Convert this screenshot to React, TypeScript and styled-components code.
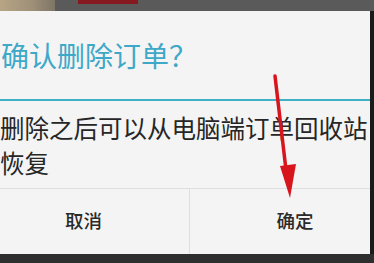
import styled, { createGlobalStyle } from "styled-components";

const GlobalStyle = createGlobalStyle`
  *, *::before, *::after {
    box-sizing: border-box;
  }
  html, body {
    margin: 0;
    padding: 0;
    background: #3c3c3c;
  }
  body {
    font-family: "Noto Sans CJK SC", "Noto Sans", sans-serif;
  }
`;

const Page = styled.div`
  width: 374px;
  height: 263px;
  overflow: hidden;
  position: relative;
  display: flex;
  flex-direction: column;
  background: #3c3c3c;
`;

const TopStrip = styled.div`
  height: 11px;
  display: flex;
  align-items: flex-start;
  background: #5a5a5a;
`;

const Thumb = styled.div`
  width: 55px;
  height: 11px;
  background: linear-gradient(90deg, #b7a585, #9d8f78 60%, #7d7565);
`;

const RedTab = styled.div`
  width: 60px;
  height: 4px;
  margin-left: 23px;
  background: #861820;
`;

const Middle = styled.div`
  display: flex;
  height: 243px;
`;

const Edge = styled.div`
  width: 4px;
  background: #1b1b1b;
`;

const Dialog = styled.div`
  width: 370px;
  position: relative;
  display: flex;
  flex-direction: column;
  background: #f4f4f4;
`;

const Title = styled.div`
  height: 88px;
  display: flex;
  align-items: center;
  padding-left: 1px;
  font-size: 28px;
  color: #3ea8c8;
`;

const Rule = styled.div`
  height: 2px;
  background: #3fb0c6;
`;

const Message = styled.div`
  padding: 9px 0 8px 0;
  font-size: 24.5px;
  line-height: 35px;
  color: #262626;
`;

const Buttons = styled.div`
  flex: 1;
  display: flex;
  border-top: 1px solid #dedede;
`;

const Btn = styled.div<{ $shift: number }>`
  flex: ${(p) => (p.$shift < 0 ? "0 0 189px" : "1")};
  display: flex;
  align-items: center;
  justify-content: center;
  padding-left: ${(p) => (p.$shift > 0 ? p.$shift : 0)}px;
  padding-right: ${(p) => (p.$shift < 0 ? -p.$shift : 0)}px;
  padding-bottom: 4px;
  font-size: 18.5px;
  font-weight: 500;
  color: #2a2a2a;
  & + & {
    border-left: 1px solid #dedede;
  }
`;

const BottomStrip = styled.div`
  flex: 1;
  background: #2e2e2e;
`;

const Arrow = styled.svg`
  position: absolute;
  left: 0;
  top: 0;
  pointer-events: none;
`;

export default function App() {
  return (
    <>
      <GlobalStyle />
      <Page>
        <TopStrip>
          <Thumb />
          <RedTab />
        </TopStrip>
        <Middle>
          <Dialog>
            <Title>确认删除订单？</Title>
            <Rule />
            <Message>删除之后可以从电脑端订单回收站恢复</Message>
            <Buttons>
              <Btn $shift={-22}>取消</Btn>
              <Btn $shift={30}>确定</Btn>
            </Buttons>
          </Dialog>
          <Edge />
        </Middle>
        <BottomStrip />
        <Arrow width="374" height="263" viewBox="0 0 374 263">
          <path d="M275 76 L286 170" stroke="#d8141c" strokeWidth="3.5" strokeLinecap="round" />
          <path d="M280 166 L296 164 L290 198 Z" fill="#d8141c" />
        </Arrow>
      </Page>
    </>
  );
}
